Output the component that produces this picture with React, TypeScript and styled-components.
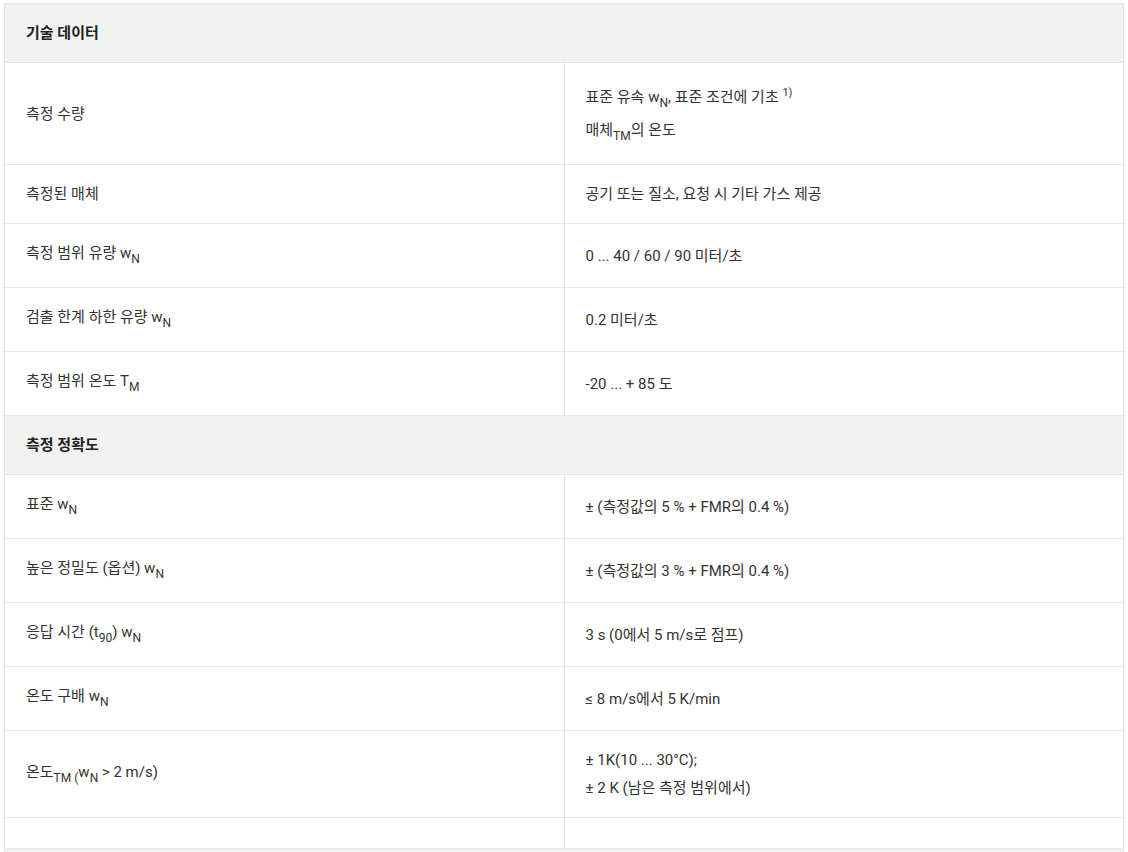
import styled, { createGlobalStyle } from 'styled-components';
import { Fragment, ReactNode } from 'react';

const GlobalStyle = createGlobalStyle`
  body {
    margin: 3px 4px;
    background: #fff;
    font-family: Roboto, 'Noto Sans CJK KR', sans-serif;
    font-size: 15px;
    color: #333;
  }
`;

const Table = styled.table`
  width: 100%;
  border-collapse: collapse;
  table-layout: fixed;
  border: 1px solid #e6e6e6;
`;

const HeadCell = styled.th`
  background-color: #f2f2f2;
  border: 1px solid #e6e6e6;
  padding: 15px 21px;
  line-height: 28px;
  text-align: left;
  font-weight: 700;
  color: #222;
`;

const Cell = styled.td`
  border: 1px solid #e6e6e6;
  padding: 15px 21px;
  line-height: 28px;
  vertical-align: middle;
  width: 50%;
  sub {
    font-size: 12px;
    line-height: 25px;
    vertical-align: -5px;
  }
  sup {
    font-size: 11px;
    line-height: 29px;
    vertical-align: 6px;
  }
`;

const Para = styled.div`
  margin: 0;
`;

interface IRow {
  label: ReactNode;
  value: ReactNode;
}

const sections: { title: string; rows: IRow[] }[] = [
  {
    title: '기술 데이터',
    rows: [
      {
        label: '측정 수량',
        value: (
          <>
            <Para>
              표준 유속 w<sub>N</sub>, 표준 조건에 기초 <sup>1)</sup>
            </Para>
            <Para>
              매체<sub>TM</sub>의 온도
            </Para>
          </>
        ),
      },
      { label: '측정된 매체', value: '공기 또는 질소, 요청 시 기타 가스 제공' },
      {
        label: (
          <>
            측정 범위 유량 w<sub>N</sub>
          </>
        ),
        value: '0 ... 40 / 60 / 90 미터/초',
      },
      {
        label: (
          <>
            검출 한계 하한 유량 w<sub>N</sub>
          </>
        ),
        value: '0.2 미터/초',
      },
      {
        label: (
          <>
            측정 범위 온도 T<sub>M</sub>
          </>
        ),
        value: '-20 ... + 85 도',
      },
    ],
  },
  {
    title: '측정 정확도',
    rows: [
      {
        label: (
          <>
            표준 w<sub>N</sub>
          </>
        ),
        value: '± (측정값의 5 % + FMR의 0.4 %)',
      },
      {
        label: (
          <>
            높은 정밀도 (옵션) w<sub>N</sub>
          </>
        ),
        value: '± (측정값의 3 % + FMR의 0.4 %)',
      },
      {
        label: (
          <>
            응답 시간 (t<sub>90</sub>) w<sub>N</sub>
          </>
        ),
        value: '3 s (0에서 5 m/s로 점프)',
      },
      {
        label: (
          <>
            온도 구배 w<sub>N</sub>
          </>
        ),
        value: '≤ 8 m/s에서 5 K/min',
      },
      {
        label: (
          <>
            온도<sub>TM (</sub>w<sub>N</sub> &gt; 2 m/s)
          </>
        ),
        value: (
          <>
            <Para>± 1K(10 ... 30°C);</Para>
            <Para>± 2 K (남은 측정 범위에서)</Para>
          </>
        ),
      },
      { label: '', value: '' },
    ],
  },
  {
    title: '\u00a0',
    rows: [],
  },
];

function App() {
  return (
    <>
      <GlobalStyle />
      <Table>
        <tbody>
          {sections.map((s, i) => (
            <Fragment key={i}>
              <tr>
                <HeadCell colSpan={2}>{s.title}</HeadCell>
              </tr>
              {s.rows.map((r, j) => (
                <tr key={j}>
                  <Cell>{r.label}</Cell>
                  <Cell>{r.value}</Cell>
                </tr>
              ))}
            </Fragment>
          ))}
        </tbody>
      </Table>
    </>
  );
}

export default App;
